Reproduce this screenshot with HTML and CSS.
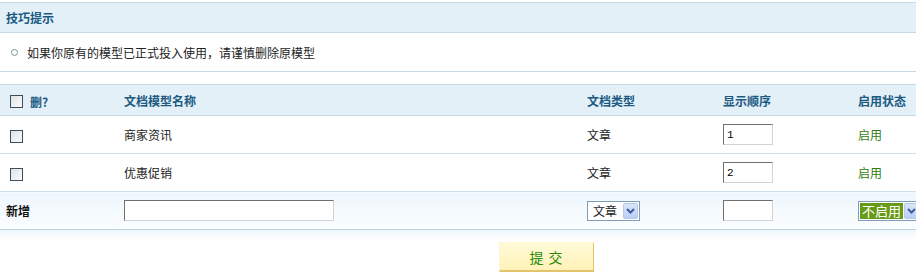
FILE: index.html
```html
<!DOCTYPE html>
<html lang="zh-CN">
  <head>
    <meta charset="UTF-8" />
    <title>文档模型管理</title>
    <link rel="stylesheet" href="styles.css">
  </head>
  <body>
    <div class="tips">
      <div class="tips-title">技巧提示</div>
      <div class="tips-body"><span class="dot"></span>如果你原有的模型已正式投入使用，请谨慎删除原模型</div>
    </div>

    <form class="model-form">
      <table class="list">
        <colgroup>
          <col class="c-del" />
          <col class="c-name" />
          <col class="c-type" />
          <col class="c-order" />
          <col class="c-state" />
        </colgroup>
        <tr class="head">
          <th><input type="checkbox" class="chk" /><span class="del-q">删?</span></th>
          <th>文档模型名称</th>
          <th>文档类型</th>
          <th>显示顺序</th>
          <th>启用状态</th>
        </tr>
        <tr>
          <td><input type="checkbox" class="chk" /></td>
          <td>商家资讯</td>
          <td>文章</td>
          <td><input type="text" class="txt order" value="1" /></td>
          <td class="on">启用</td>
        </tr>
        <tr>
          <td><input type="checkbox" class="chk" /></td>
          <td>优惠促销</td>
          <td>文章</td>
          <td><input type="text" class="txt order" value="2" /></td>
          <td class="on">启用</td>
        </tr>
        <tr class="add">
          <td class="add-label">新增</td>
          <td><input type="text" class="txt name" /></td>
          <td>
            <span class="fake-select type-select">
              <span class="val">文章</span>
              <span class="arrow"><svg width="9" height="6" viewBox="0 0 9 6"><path d="M1 1 L4.5 4.5 L8 1" fill="none" stroke="#3a5f9a" stroke-width="2"/></svg></span>
            </span>
          </td>
          <td><input type="text" class="txt order" /></td>
          <td>
            <span class="fake-select state-select">
              <span class="val picked">不启用</span>
              <span class="arrow"><svg width="9" height="6" viewBox="0 0 9 6"><path d="M1 1 L4.5 4.5 L8 1" fill="none" stroke="#3a5f9a" stroke-width="2"/></svg></span>
            </span>
          </td>
        </tr>
      </table>
      <div class="fade"></div>

      <div class="actions">
        <button type="submit" class="submit">提 交</button>
      </div>
    </form>
  </body>
</html>
```

FILE: styles.css
```css
* {
  font-family: "Noto Sans CJK SC", "Liberation Sans", sans-serif;
  box-sizing: border-box;
}

html,
body {
  overflow: hidden;
}

body {
  margin: 0;
  padding-top: 2px;
  font-size: 12px;
  color: #222;
  background-color: #fff;
}

/* tips box */
.tips {
  border-top: 1px solid #c3dbe9;
  border-bottom: 1px solid #c3dbe9;
}

.tips-title {
  height: 30px;
  line-height: 30px;
  padding-left: 6px;
  background-color: #e3f0f8;
  border-bottom: 1px solid #c3dbe9;
  color: #1b5a82;
  font-weight: bold;
}

.tips-body {
  display: flex;
  align-items: center;
  height: 38px;
  padding-left: 11px;
}

.dot {
  width: 7px;
  height: 7px;
  margin-right: 9px;
  border: 1px solid #7a9a86;
  border-radius: 50%;
}

/* list table */
.model-form {
  margin-top: 12px;
  background: linear-gradient(#f5fafd, #fff 12px);
}

.list {
  width: 100%;
  table-layout: fixed;
  border-collapse: collapse;
  border-top: 1px solid #c3dbe9;
}

.c-del { width: 118px; }
.c-name { width: 463px; }
.c-type { width: 136px; }
.c-order { width: 135px; }

.list th,
.list td {
  padding: 0 0 0 6px;
  text-align: left;
  white-space: nowrap;
  border-bottom: 1px solid #cfdfe8;
}

.list th {
  height: 31px;
  background-color: #e3f0f8;
  color: #1b5a82;
  font-weight: bold;
  border-bottom-color: #c3dbe9;
}

.list td {
  height: 38px;
}

.del-q {
  margin-left: 4px;
  vertical-align: middle;
}

.chk {
  appearance: none;
  width: 13px;
  height: 13px;
  margin: 0 3px 0 4px;
  vertical-align: middle;
  border: 1px solid #3d4f5e;
  background: linear-gradient(135deg, #dfe3e6, #fbfbfb);
}

.on {
  color: #2f7d10;
}

.txt {
  height: 21px;
  padding: 0 3px;
  font-size: 11px;
  font-family: "Liberation Mono", monospace;
  border: 1px solid #d2d2d2;
  border-top-color: #707070;
  border-left-color: #707070;
  background-color: #fff;
  vertical-align: middle;
}

.order {
  width: 50px;
}

.name {
  width: 210px;
}

.add td {
  background: linear-gradient(#eef6fc, #fafdff);
  border-bottom-color: #bcd3e0;
}

.add-label {
  font-weight: bold;
  color: #111;
}

.fake-select {
  display: inline-flex;
  align-items: center;
  height: 20px;
  padding: 1px;
  border: 1px solid #7f9db9;
  background-color: #fff;
  vertical-align: middle;
}

.fake-select .val {
  padding: 0 3px;
  line-height: 16px;
  font-size: 12px;
}

.type-select .val {
  padding-left: 4px;
  padding-right: 5px;
}

.fake-select .picked {
  background-color: #679a16;
  color: #fff;
  padding: 0 2px;
  font-size: 13px;
}

.arrow {
  display: flex;
  align-items: center;
  justify-content: center;
  width: 15px;
  height: 16px;
  margin-left: 1px;
  border: 1px solid #b5c8ec;
  border-radius: 2px;
  background: linear-gradient(#dbe6fb, #b9cdf5);
}

.fade {
  height: 10px;
  background: linear-gradient(#eef6fb, #fff);
}

.actions {
  display: flex;
  justify-content: center;
  padding-top: 2px;
  padding-left: 177px;
}

.submit {
  width: 95px;
  height: 30px;
  font-size: 14px;
  color: #2c8a08;
  letter-spacing: 1px;
  background: linear-gradient(#fffbd8, #fff1b8);
  border: 1px solid #fff5d0;
  border-right-color: #e4c46a;
  border-bottom: 2px solid #e4c46a;
  cursor: pointer;
}
```
